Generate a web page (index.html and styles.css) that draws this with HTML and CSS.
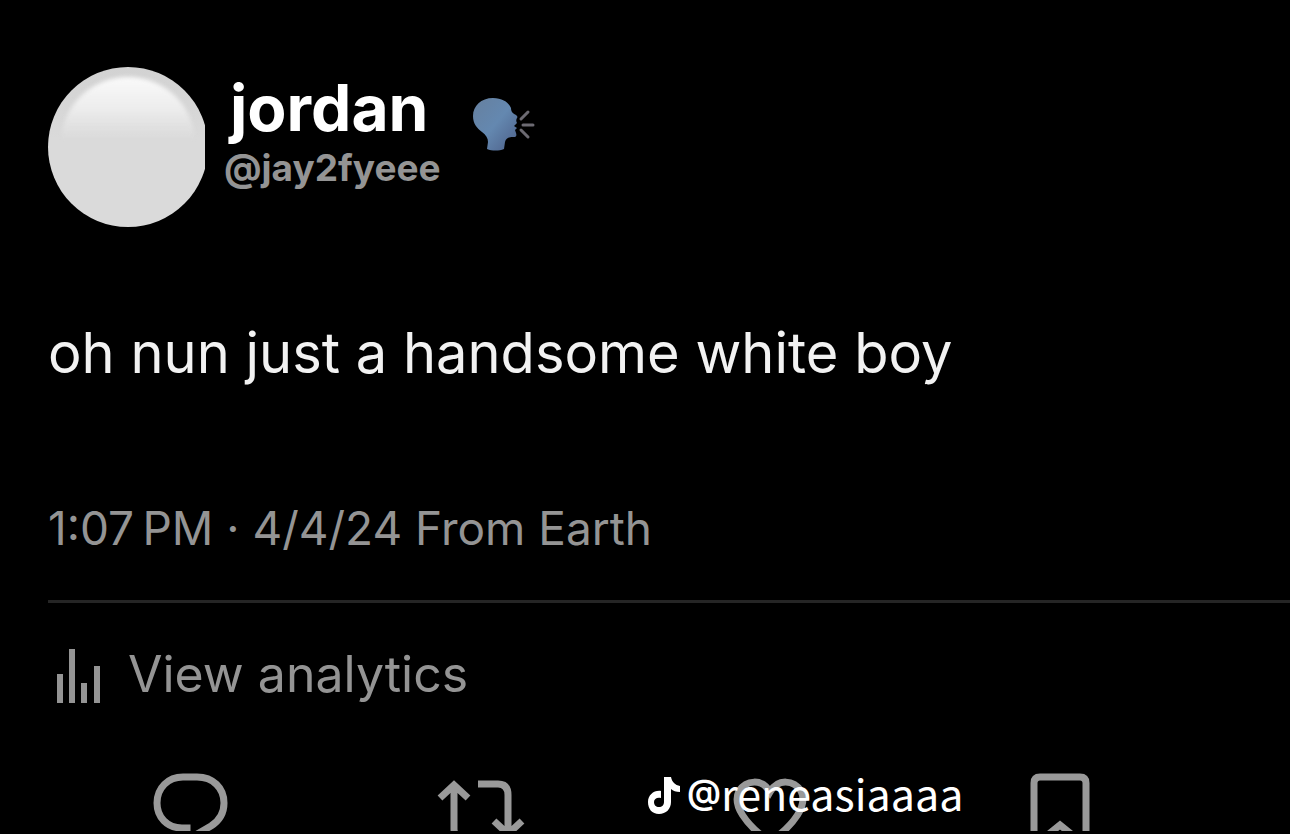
FILE: index.html
```html
<!DOCTYPE html>
<html lang="en">
<head>
  <meta charset="UTF-8" />
  <meta name="viewport" content="width=device-width, initial-scale=1.0"/>
  <title>jordan: oh nun just a handsome white boy</title>
  <link rel="stylesheet" href="styles.css">
</head>
<body>
  <article class="post">
    <header class="author">
      <div class="avatar"><div class="avatar-face"></div></div>
      <div class="names">
        <h1 class="name">jordan</h1>
        <a class="handle" href="#">@jay2fyeee</a>
      </div>
      <svg class="emoji" viewBox="0 0 64 56" role="img" aria-label="speaking head">
        <defs>
          <linearGradient id="head" x1="0" y1="0" x2="1" y2="1">
            <stop offset="0" stop-color="#66809f"/>
            <stop offset=".5" stop-color="#6488b0"/>
            <stop offset="1" stop-color="#4c5f88"/>
          </linearGradient>
        </defs>
        <path fill="url(#head)" d="M20 1C8 1 0 9 0 19c0 8 4 12 9 16 4 3 6 6 6 10l-1 7c5 2 12 2 17 0l1-7c1-4 4-5 8-5 3 0 4-1 3-4l-1-3 2-2-3-2 3-3c-1-2-1-3 0-5 1-1 0-2-1-3-4-2-5-4-5-7C36 6 30 1 20 1z"/>
        <path stroke="#6c6a72" stroke-width="3" stroke-linecap="round" fill="none" d="M48 22l7-7M50 28h10M48 33l7 7"/>
      </svg>
    </header>

    <p class="text">oh nun just a handsome white boy</p>
    <p class="meta">1:07&#8239;PM · 4/4/24 From Earth</p>

    <a class="analytics" href="#">
      <svg class="bars" viewBox="0 0 46 56" aria-hidden="true">
        <path d="M1 27h6v29H1zM13 2h6v54h-6zM25 36h6v20h-6zM38 19h6v37h-6z"/>
      </svg>
      View analytics
    </a>

    <div class="actions">
      <button class="action" aria-label="Reply">
        <svg viewBox="0 0 88 88">
          <path d="M40 70V62H35C20 62 10 51 10 37 10 22 21 11 36 11H50C66 11 77 22 77 37 77 47 72 55 64 60L40 74"/>
        </svg>
      </button>
      <button class="action" aria-label="Repost">
        <svg viewBox="0 0 88 88">
          <path d="M3 32L17 19 31 32M17 20V63Q17 71 25 71H44M41 18H61Q71 18 71 29V66M57 55L71 68 85 55"/>
        </svg>
      </button>
      <button class="action" aria-label="Like">
        <svg viewBox="0 0 88 88">
          <path d="M43 26C35 12 19 14 12 25 5 39 18 58 43 76 68 58 81 39 74 25 67 14 51 12 43 26z"/>
        </svg>
      </button>
      <button class="action" aria-label="Bookmark">
        <svg viewBox="0 0 88 88">
          <path d="M17 80V17Q17 11 23 11H63Q69 11 69 17V80L43 59z"/>
        </svg>
      </button>
    </div>
  </article>

  <div class="watermark">
    <svg class="note" viewBox="0 0 34 38" aria-hidden="true">
      <path d="M17 1h7c1 5 4 8 9 9v6c-4 0-7-1-9-3v13c0 7-5 12-12 12S1 33 1 26s6-12 13-11v7c-4-1-7 1-7 4s2 5 5 5 5-2 5-5z"/>
    </svg>
    <span class="at">@</span><span>reneasiaaaa</span>
  </div>
</body>
</html>
```

FILE: styles.css
```css
* {
  margin: 0;
  padding: 0;
  box-sizing: border-box;
}
body {
  position: relative;
  height: 100vh;
  overflow: hidden;
  background: #000;
  color: #949494;
  font-family: Inter, sans-serif;
}
a {
  color: inherit;
  text-decoration: none;
}
.post {
  height: calc(100vh - 3px);
  padding-top: 67px;
  overflow: hidden;
}
.author {
  display: flex;
  align-items: flex-start;
  padding-left: 48px;
}
.avatar {
  width: 157px;
  height: 160px;
  overflow: hidden;
}
.avatar-face {
  position: relative;
  width: 160px;
  height: 160px;
  border-radius: 50%;
  background: linear-gradient(#d2d2d2, #dadada 45%);
}
.avatar-face::before {
  content: "";
  position: absolute;
  top: 10px;
  left: 13px;
  width: 134px;
  height: 110px;
  border-radius: 50% 50% 0 0 / 60% 60% 0 0;
  background: linear-gradient(#fafafa, #ededed 28%, rgba(218, 218, 218, 0) 58%);
  filter: blur(2px);
}
.names {
  display: flex;
  flex-direction: column;
  padding: 9px 0 0 19px;
}
.name {
  padding-left: 6px;
  color: #fff;
  font-size: 64px;
  font-weight: 700;
  line-height: 64px;
}
.handle {
  font-size: 37px;
  font-weight: 700;
  line-height: 56px;
}
.emoji {
  width: 64px;
  height: 56px;
  margin: 30px 0 0 32px;
}
.text {
  padding: 88px 48px 0;
  color: #f2f2f2;
  font-size: 56px;
  line-height: 76px;
}
.meta {
  margin-left: 48px;
  padding: 105px 0 40px;
  border-bottom: 3px solid #252525;
  font-size: 46px;
  line-height: 64px;
}
.analytics {
  display: flex;
  align-items: flex-start;
  gap: 26px;
  padding: 38px 56px 0;
  font-size: 50px;
  line-height: 66px;
}
.bars {
  width: 46px;
  height: 56px;
  margin-top: 6px;
  fill: #949494;
}
.actions {
  display: grid;
  grid-template-columns: repeat(4, 1fr);
  justify-items: center;
  padding: 59px 84px 0 46px;
}
.action {
  height: 88px;
  border: none;
  background: none;
  cursor: pointer;
}
.action svg {
  display: block;
  width: 88px;
  height: 88px;
  overflow: visible;
  fill: none;
  stroke: #999;
  stroke-width: 7;
}
.watermark {
  position: absolute;
  left: 647px;
  bottom: 12px;
  display: flex;
  align-items: center;
  color: #fff;
  font: 400 43px/60px "Noto Sans CJK SC", sans-serif;
}
.note {
  width: 34px;
  height: 38px;
  margin: 6px 6px 0 0;
  fill: #fff;
}
.at {
  font: 600 34px/60px Inter, sans-serif;
}
```
